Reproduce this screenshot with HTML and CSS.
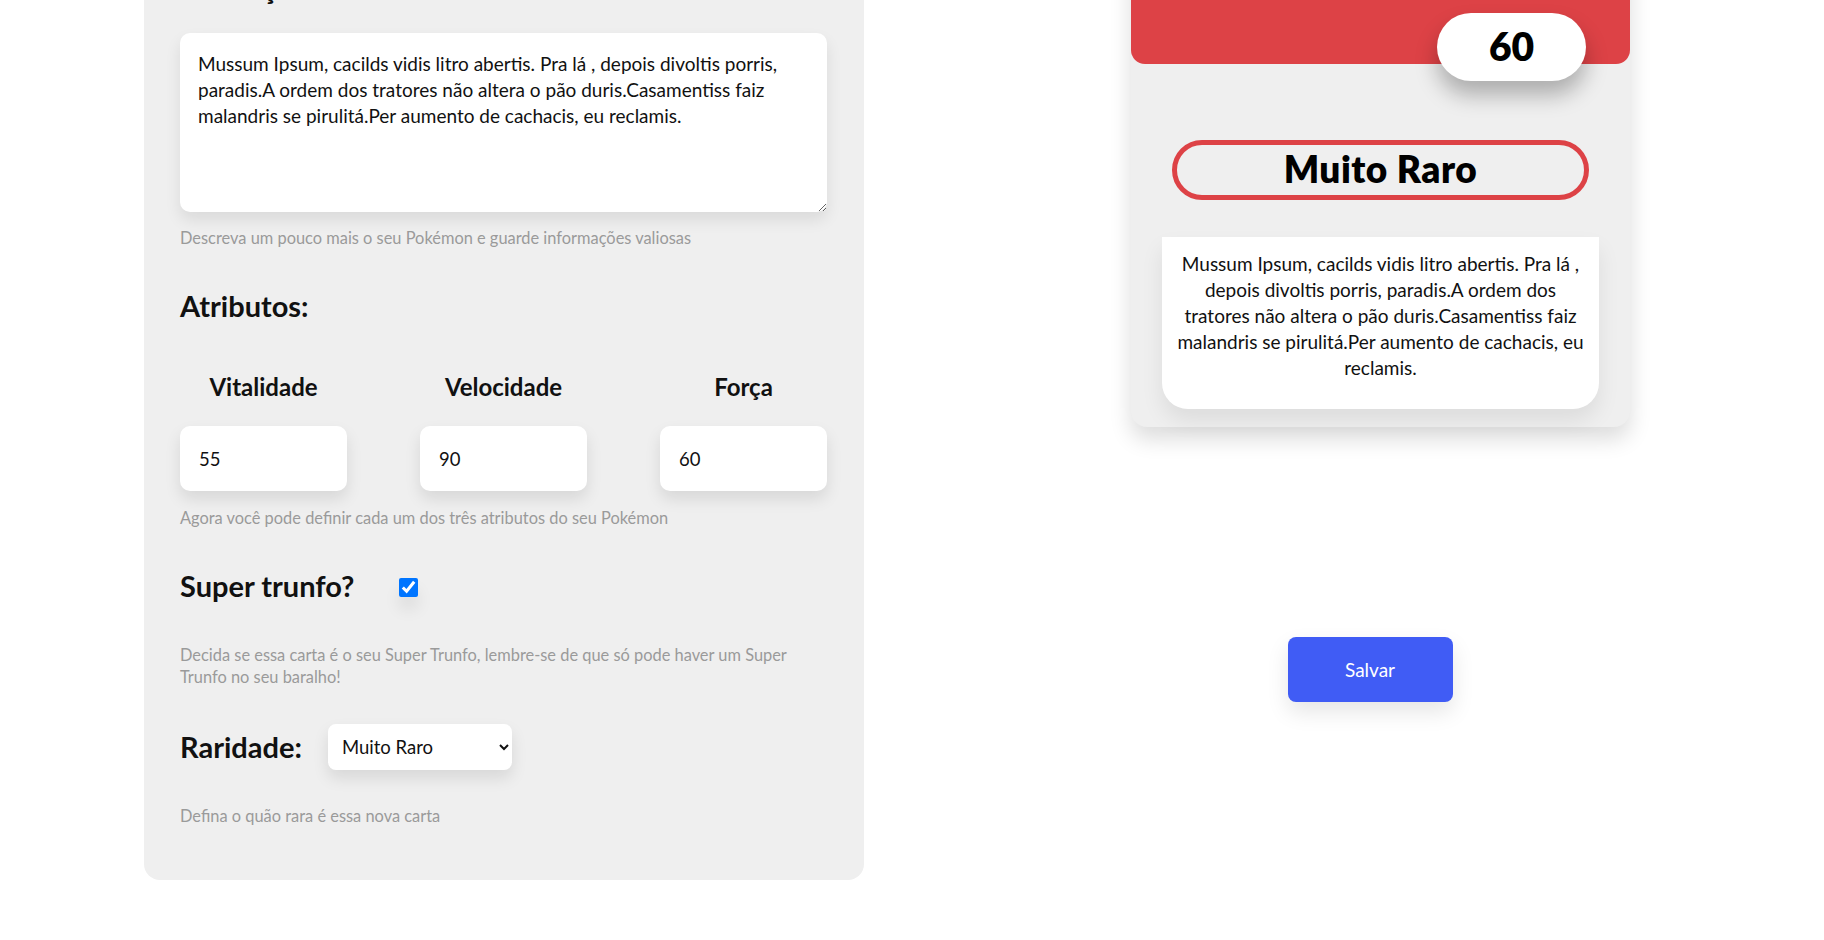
FILE: index.html
```html
<!DOCTYPE html>
<html lang="pt-BR">
<head>
<meta charset="utf-8">
<title>Super Trunfo</title>
<link rel="stylesheet" href="styles.css">
</head>
<body>
<main class="page">
  <form class="form-panel">
    <h2 class="section-title">Descrição:</h2>
    <textarea class="description-input">Mussum Ipsum, cacilds vidis litro abertis. Pra lá , depois divoltis porris, paradis.A ordem dos tratores não altera o pão duris.Casamentiss faiz malandris se pirulitá.Per aumento de cachacis, eu reclamis.</textarea>
    <p class="helper helper-desc">Descreva um pouco mais o seu Pokémon e guarde informações valiosas</p>

    <h2 class="section-title attrs-title">Atributos:</h2>
    <div class="attrs">
      <label class="attr">
        <span class="attr-label">Vitalidade</span>
        <input class="attr-input" type="number" value="55">
      </label>
      <label class="attr">
        <span class="attr-label">Velocidade</span>
        <input class="attr-input" type="number" value="90">
      </label>
      <label class="attr">
        <span class="attr-label">Força</span>
        <input class="attr-input" type="number" value="60">
      </label>
    </div>
    <p class="helper helper-attrs">Agora você pode definir cada um dos três atributos do seu Pokémon</p>

    <div class="trunfo-row">
      <h2 class="section-title">Super trunfo?</h2>
      <input class="trunfo-check" type="checkbox" checked>
    </div>
    <p class="helper helper-trunfo">Decida se essa carta é o seu Super Trunfo, lembre-se de que só pode haver um Super Trunfo no seu baralho!</p>

    <div class="rarity-row">
      <h2 class="section-title">Raridade:</h2>
      <select class="rarity-select">
        <option>Comum</option>
        <option>Raro</option>
        <option selected>Muito Raro</option>
      </select>
    </div>
    <p class="helper helper-rarity">Defina o quão rara é essa nova carta</p>
  </form>

  <section class="preview">
    <article class="card">
      <div class="card-header">
        <div class="hp-badge">60</div>
      </div>
      <div class="rarity-pill">Muito Raro</div>
      <p class="card-desc">Mussum Ipsum, cacilds vidis litro abertis. Pra lá , depois divoltis porris, paradis.A ordem dos tratores não altera o pão duris.Casamentiss faiz malandris se pirulitá.Per aumento de cachacis, eu reclamis.</p>
    </article>
    <button class="save-btn" type="button">Salvar</button>
  </section>
</main>
</body>
</html>
```

FILE: styles.css
```css
* { box-sizing: border-box; }

html, body {
  margin: 0;
  padding: 0;
  background: #ffffff;
  overflow: hidden;
}

body {
  font-family: "Lato", "Open Sans", sans-serif;
  color: #111111;
}

.page {
  display: grid;
  grid-template-columns: 720px 1fr;
  column-gap: 52px;
  padding-left: 144px;
  margin-top: -61px;
  align-items: start;
}

/* ---------- form panel ---------- */
.form-panel {
  background: #efefef;
  border-radius: 16px;
  padding: 32px 37px 53px 36px;
  display: flex;
  flex-direction: column;
}

.section-title {
  margin: 0;
  font-size: 29px;
  line-height: 34px;
  font-weight: 700;
  color: #111;
}

.description-input {
  display: block;
  margin-top: 28px;
  width: 100%;
  height: 179px;
  border: none;
  border-radius: 10px;
  background: #ffffff;
  padding: 18px 18px;
  font-family: inherit;
  font-size: 19px;
  line-height: 26px;
  color: #111;
  box-shadow: 0 8px 16px rgba(0, 0, 0, 0.09);
  outline: none;
}

.helper {
  margin: 0;
  font-size: 16.4px;
  line-height: 22px;
  color: #9a9a9a;
}

.helper-desc { margin-top: 15px; }

.attrs-title { margin-top: 40px; }

.attrs {
  margin-top: 49px;
  display: grid;
  grid-template-columns: repeat(3, 1fr);
  column-gap: 73px;
}

.attr {
  display: flex;
  flex-direction: column;
  align-items: center;
}

.attr-label {
  font-size: 24px;
  line-height: 30px;
  font-weight: 700;
  color: #111;
}

.attr-input {
  margin-top: 24px;
  width: 100%;
  height: 65px;
  border: none;
  border-radius: 10px;
  background: #ffffff;
  padding: 0 19px;
  font-family: inherit;
  font-size: 18.5px;
  color: #111;
  box-shadow: 0 8px 16px rgba(0, 0, 0, 0.1);
  outline: none;
  -moz-appearance: textfield;
}
.attr-input::-webkit-outer-spin-button,
.attr-input::-webkit-inner-spin-button {
  -webkit-appearance: none;
  margin: 0;
}

.helper-attrs { margin-top: 16px; }

.trunfo-row {
  margin-top: 40px;
  display: flex;
  align-items: center;
  gap: 45px;
}

.trunfo-check {
  margin: 2px 0 0;
  width: 19px;
  height: 19px;
  accent-color: #0075ff;
  box-shadow: 0 12px 16px rgba(0, 0, 0, 0.08);
}

.helper-trunfo { margin-top: 41px; }

.rarity-row {
  margin-top: 36px;
  display: flex;
  align-items: center;
  gap: 26px;
}

.rarity-select {
  width: 184px;
  height: 46px;
  border: none;
  border-radius: 8px;
  background: #ffffff;
  padding: 0 6px 0 10px;
  font-family: inherit;
  font-size: 18.5px;
  color: #111;
  box-shadow: 0 8px 16px rgba(0, 0, 0, 0.1);
  outline: none;
}

.helper-rarity { margin-top: 35px; }

/* ---------- preview ---------- */
.preview {
  display: flex;
  flex-direction: column;
  align-items: center;
}

.card {
  margin-left: 21px;
  width: 499px;
  background: #efefef;
  border-radius: 16px;
  box-shadow: 0 12px 22px rgba(0, 0, 0, 0.14);
  padding-bottom: 18px;
  display: flex;
  flex-direction: column;
  align-items: center;
}

.card-header {
  position: relative;
  align-self: stretch;
  height: 125px;
  background: #dd4246;
  border-radius: 16px 16px 14px 14px;
}

.hp-badge {
  position: absolute;
  right: 44px;
  bottom: -17px;
  width: 149px;
  height: 68px;
  border-radius: 34px;
  background: #ffffff;
  display: flex;
  align-items: center;
  justify-content: center;
  padding-bottom: 2px;
  font-size: 39px;
  font-weight: 800;
  color: #000;
  box-shadow: 0 14px 22px rgba(0, 0, 0, 0.28);
}

.rarity-pill {
  margin-top: 76px;
  width: 417px;
  height: 60px;
  border: 5px solid #dd4246;
  border-radius: 30px;
  display: flex;
  align-items: center;
  justify-content: center;
  padding-bottom: 4px;
  font-size: 37px;
  letter-spacing: 0.5px;
  font-weight: 800;
  color: #000;
}

.card-desc {
  margin: 37px 0 0;
  width: 437px;
  min-height: 172px;
  background: #ffffff;
  border-radius: 0 0 26px 26px;
  padding: 14px 12px 28px;
  text-align: center;
  font-size: 19px;
  line-height: 26px;
  color: #111;
  box-shadow: 0 12px 22px rgba(0, 0, 0, 0.08);
}

.save-btn {
  margin-top: 210px;
  width: 165px;
  height: 65px;
  border: none;
  border-radius: 8px;
  background: #405cf5;
  color: #ffffff;
  font-family: inherit;
  font-size: 19px;
  padding-bottom: 2px;
  box-shadow: 0 10px 22px rgba(0, 0, 0, 0.1);
  cursor: pointer;
}
```
